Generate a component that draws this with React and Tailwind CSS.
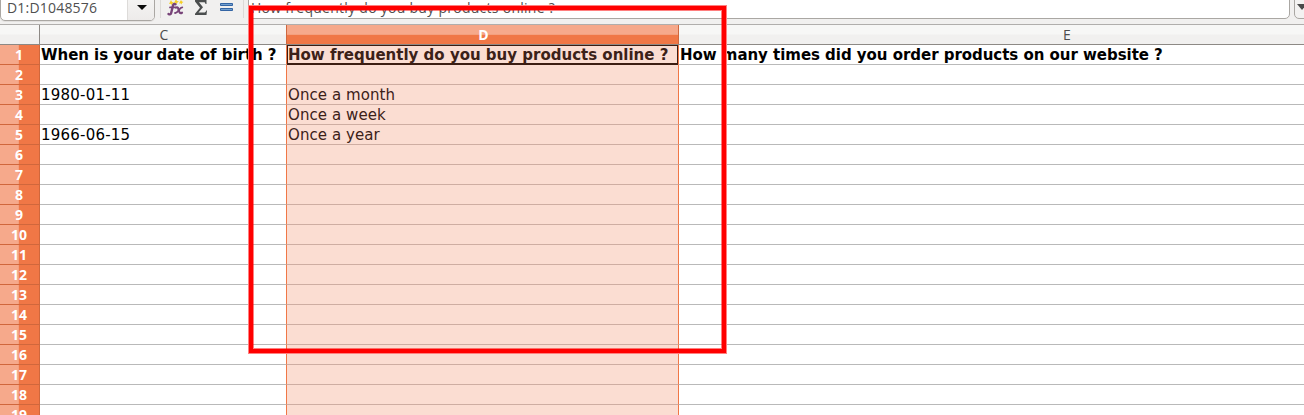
const columns = [
  { id: 'C', width: 'w-[247px]', indent: 'pl-[2px]' },
  { id: 'D', width: 'w-[392px]', indent: 'pl-[2px]', selected: true },
  { id: 'E', width: 'w-[777px]', indent: 'pl-0' },
];

const cells = {
  1: [
    'When is your date of birth ?',
    'How frequently do you buy products online ?',
    'How many times did you order products on our website ?',
  ],
  3: ['1980-01-11', 'Once a month', ''],
  4: ['', 'Once a week', ''],
  5: ['1966-06-15', 'Once a year', ''],
};

const rows = Array.from({ length: 19 }, (_, i) => i + 1);

function FunctionIcon() {
  return (
    <svg width="18" height="16" viewBox="0 0 18 16" className="shrink-0">
      <g fill="#f6cf26">
        <path d="M4 0l1 2 2 .4-1.600 1.100-.4 1.500-1.500-1.200-1.500.2.9-1.700z" />
        <path d="M9 -1l1 2 2 .4-1.600 1.100-.4 1.500-1.500-1.200-1.500.2.9-1.700z" />
        <path d="M14 0l1 1.500 1.500.4-1.500 1-.4 1.500-1.200-1.200-1.400.2.9-1.600z" />
      </g>
      <g fill="none" stroke="#774378" strokeLinecap="round">
        <path d="M8.500 4.200C6.500 3.200 6 5 5.500 7.500L4.300 12.500C3.900 14.500 2.800 14.700 1.500 14" strokeWidth="2.400" />
        <path d="M3 7.400H8" strokeWidth="1.800" />
        <path d="M9 7.600c2-.8 2.300.5 2.800 2.700s1.200 3.500 3.200 2.400" strokeWidth="2.200" />
        <path d="M15.300 7.300c-2 0-2.800 2-3.700 3.200S9.300 13.200 8 13" strokeWidth="1.800" />
      </g>
    </svg>
  );
}

function SumIcon() {
  return (
    <svg width="14" height="16" viewBox="0 0 14 16" className="shrink-0">
      <path
        d="M1 0H12.500V4H11.500C11.300 2.600 10.800 2.200 9.500 2.200H5L9 7.200L4.500 12.500H9.800C11.300 12.500 11.800 12 12.200 10.500H13L12.500 15H1V13.800L6 7.800L1 1.500Z"
        fill="#4b4e4e"
      />
    </svg>
  );
}

function EqualsIcon() {
  return (
    <svg width="13" height="9" viewBox="0 0 13 9" className="shrink-0">
      <path d="M.5 .5H12.500V2.500H.5ZM.5 5.500H12.500V7.500H.5Z" fill="#729fcf" stroke="#3465a4" />
    </svg>
  );
}

function FormulaBar() {
  return (
    <div className="relative flex h-6 items-start overflow-hidden bg-[#f1f0ef] font-['Open_Sans','Noto_Sans',sans-serif] text-[#505050]">
      <div className="-mt-3 flex h-[33px] w-[155px] shrink-0 overflow-hidden rounded-[5px] border border-[#aaa7a3] bg-white shadow-[0_1px_0_#e2e0de]">
        <div className="w-[126px] pl-[6px] pt-[9px] text-[14px] leading-[20px] tracking-[0.2px]">
          <span className="inline-block whitespace-nowrap">D1:D1048576</span>
        </div>
        <div className="flex flex-1 justify-center border-l border-[#dddbd9] bg-gradient-to-b from-[#f8f8f7] to-[#edebea] pl-px pt-[16px]">
          <svg width="10" height="5" viewBox="0 0 10 5">
            <path d="M0 0H10L5 5Z" fill="#0c0c0c" />
          </svg>
        </div>
      </div>
      <div className="ml-[5px] h-[18px] w-px shrink-0 bg-[#dcdad8]" />
      <div className="ml-[6px]"><FunctionIcon /></div>
      <div className="ml-[9px]"><SumIcon /></div>
      <div className="ml-[12px] pt-[3px]"><EqualsIcon /></div>
      <div className="ml-[10px] h-[18px] w-px shrink-0 bg-[#dcdad8]" />
      <div className="-mt-3 ml-[4px] h-[31px] w-[1042px] shrink-0 rounded-[5px] border border-[#aaa7a3] bg-white pl-[2px] pt-[9px] text-[14px] leading-[20px] tracking-[0.27px]">
        <span className="inline-block whitespace-nowrap">How frequently do you buy products online ?</span>
      </div>
      <div className="-mt-3 ml-[4px] h-[31px] w-[30px] shrink-0 rounded-[5px] border border-[#aaa7a3] bg-[#f3f2f1] pl-[2px] pt-[15px]">
        <svg width="10" height="6" viewBox="0 0 10 6">
          <path d="M0 0H10L5 6Z" fill="#4a4a4a" />
        </svg>
      </div>
    </div>
  );
}

function ColumnHeader({ column }) {
  const tone = column.selected
    ? 'border-[#d0673c] bg-[linear-gradient(#f6a98b_0_9px,#f4a07e_9px_10px,#f07746_10px)] font-bold text-white'
    : column.id === 'C'
      ? 'border-[#cf683f] bg-[linear-gradient(#f7f7f6_0_9px,#f1f0ef_10px)] text-[#4c4c4c]'
      : 'border-[#c4c2c0] bg-[linear-gradient(#f7f7f6_0_9px,#f1f0ef_10px)] text-[#4c4c4c]';
  return (
    <div className={`${column.width} ${column.indent} ${tone} flex h-full shrink-0 items-center justify-center border-r pt-[1px] text-[14px] leading-none`}>
      {column.id}
    </div>
  );
}

function Cell({ column, row, text }) {
  const active = column.selected && row === 1;
  const tone = column.selected
    ? 'border-b-[#ceada2] border-r-[#f07746] bg-[#fbddd2] text-[#3c2118]'
    : column.id === 'C'
      ? 'border-b-[#b9b9b9] border-r-[#f07746] bg-white text-black'
      : 'border-b-[#b9b9b9] border-r-[#b9b9b9] bg-white text-black';
  const type =
    row === 1
      ? column.selected ? 'font-bold' : 'font-bold tracking-[-0.035px]'
      : column.selected ? 'tracking-[0.08px]' : 'tracking-[0.22px]';
  return (
    <div className={`${column.width} ${tone} ${type} relative h-5 shrink-0 border-b border-r pl-px text-[15px] leading-[20px]`}>
      <span className="block whitespace-nowrap">{text}</span>
      {active && <div className="absolute -bottom-px left-0 right-0 top-0 border border-b-2 border-[#3c1d12]" />}
    </div>
  );
}

export default function App() {
  return (
    <div className="relative h-[415px] w-[1304px] overflow-hidden bg-white">
      <FormulaBar />
      <div className="flex h-[21px] border-b border-t border-b-[#8d8985] border-t-[#b0aeac] font-['Open_Sans','Noto_Sans',sans-serif]">
        <div className="h-full w-10 shrink-0 border-r border-[#8d8985] bg-[linear-gradient(#f7f7f6_0_9px,#f1f0ef_10px)]" />
        {columns.map((column) => <ColumnHeader key={column.id} column={column} />)}
      </div>
      {rows.map((row) => (
        <div key={row} className="flex h-5">
          <div className="flex w-10 shrink-0 items-center justify-center border-b border-r border-[#d0673c] bg-[linear-gradient(90deg,#f6a98b_0_18px,#f4a07e_18px_19px,#f07746_19px)] pr-px font-['Open_Sans','Noto_Sans',sans-serif] text-[14px] font-bold leading-none text-white">
            {row}
          </div>
          <div className="flex font-['DejaVu_Sans',sans-serif]">
            {columns.map((column, i) => (
              <Cell key={column.id} column={column} row={row} text={cells[row]?.[i] ?? ''} />
            ))}
          </div>
        </div>
      ))}
      <div className="absolute left-[248px] top-[5px] h-[349px] w-[479px] border border-[#ff8080]">
        <div className="h-full w-full border-4 border-[#ff0000]">
          <div className="h-full w-full border border-[#ff0000]/50" />
        </div>
      </div>
    </div>
  );
}
